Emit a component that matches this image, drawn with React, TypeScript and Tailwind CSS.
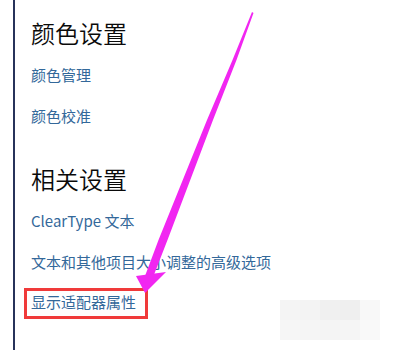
import React from 'react';

const cjk = { fontFamily: '"Noto Sans CJK SC", "Noto Sans", sans-serif' };

// faint watermark tiles in the bottom-right corner
const tiles = [
  '#f4f4f4', '#f3f3f3', '#f0f0f0', '#efefef', '#f8f8f8',
  '#f6f6f6', '#f5f5f5', '#f4f4f4', '#f5f5f5', '#f9f9f9',
];

const Arrow: React.FC = () => (
  <svg className="pointer-events-none absolute left-0 top-0" width="407" height="350" viewBox="0 0 407 350">
    <polygon
      fill="#f126f1"
      points="252,12 232.5,60 207,120 158.5,240 145,276 153.5,276 167.5,240 213,120 236.5,60 253.5,13"
    />
    <polygon fill="#f126f1" points="136,276 166,272 145,293" />
  </svg>
);

export default function App() {
  return (
    <div className="relative h-[350px] w-[407px] overflow-hidden bg-white" style={cjk}>
      <div className="ml-[13px] h-full border-l-2 border-[#27325a] pl-[16px]">
        <div className="flex flex-col items-start pt-[21px]">
          <h2 className="text-[24px] leading-[24px] font-[350] text-[#0a0a0a]">颜色设置</h2>
          <a className="mt-[20px] text-[15px] leading-[20px] text-[#33689a]">颜色管理</a>
          <a className="mt-[21px] text-[15px] leading-[20px] text-[#33689a]">颜色校准</a>

          <h2 className="mt-[41px] text-[24px] leading-[24px] font-[350] text-[#0a0a0a]">相关设置</h2>
          <a className="mt-[20px] text-[15px] leading-[20px] text-[#33689a]">ClearType 文本</a>
          <a className="mt-[21px] text-[15px] leading-[20px] text-[#33689a]">文本和其他项目大小调整的高级选项</a>
          <a className="-ml-[7px] mt-[16px] border-[3px] border-[#f03a3a] pt-[1px] pb-[4px] pl-[4px] pr-[9px] text-[15px] leading-[20px] text-[#33689a]">
            显示适配器属性
          </a>
        </div>
      </div>

      <div className="absolute left-[280px] top-[300px] grid w-[100px] grid-cols-5">
        {tiles.map((c, i) => (
          <div key={i} className="h-[20px] w-[20px]" style={{ backgroundColor: c }} />
        ))}
      </div>

      <Arrow />
    </div>
  );
}
